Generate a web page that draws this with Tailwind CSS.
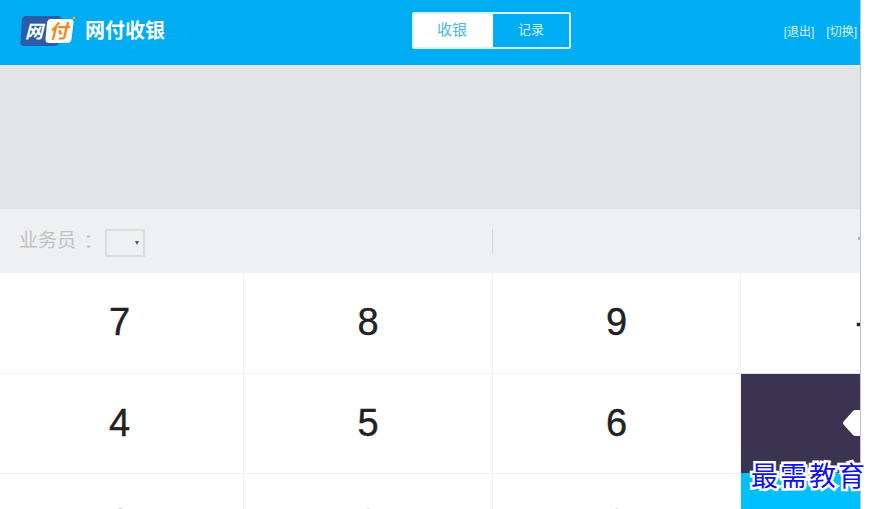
<!DOCTYPE html>
<html lang="zh-CN">
<head>
  <meta charset="UTF-8">
  <title>网付收银</title>
  <script src="https://cdn.jsdelivr.net/npm/@tailwindcss/browser@4"></script>
</head>
<body class="bg-white font-['Liberation_Sans','Noto_Sans_CJK_SC',sans-serif] text-[#222]">
  <div class="relative h-[509px] w-[873px] overflow-hidden">
    <div class="h-[509px] w-[861px] overflow-hidden border-r border-[#c4c4c6]">

      <!-- header -->
      <header class="grid h-[65px] grid-cols-[412px_159px_1fr] items-center bg-[#00adf2] text-white">
        <div class="flex items-center pl-[20px]">
          <svg width="56" height="32" viewBox="0 0 56 32" class="mb-[4px] shrink-0">
            <path d="M6 1H38Q42 1 41 5L39 27Q38.500 31 34 31H4Q0 31 .4 27L2 5Q2.500 1 6 1Z" fill="#2a5da8"/>
            <path d="M31 4H50Q54 4 53.500 8L51.500 24Q51 28 47 28H29Q25 28 25.500 24L27 8Q27.500 4 31 4Z" fill="#fff"/>
            <text x="5" y="23" font-size="18" font-style="italic" font-weight="700" fill="#fff" font-family="Noto Sans CJK SC">网</text>
            <text x="29" y="23" font-size="19" font-style="italic" font-weight="700" fill="#ee8a1d" font-family="Noto Sans CJK SC">付</text>
            <circle cx="54" cy="3" r="1.500" fill="#e6a33c"/>
          </svg>
          <span class="mb-[4px] ml-[9px] text-[20px] leading-none font-bold">网付收银</span>
        </div>
        <div class="mb-[5px] flex h-[37px] w-[159px] overflow-hidden rounded-[2px] border-2 border-[#d6f2fd]">
          <div class="flex w-[79px] items-center justify-center bg-white pr-[3px] text-[15px] text-[#45b8ee]">收银</div>
          <div class="flex flex-1 items-center justify-center text-[13px] text-[#d9f3fd]">记录</div>
        </div>
        <div class="flex justify-end gap-[12px] pr-[3px] pb-[2px] text-[12px] text-[#d9f3fd]">
          <span>[退出]</span>
          <span>[切换]</span>
        </div>
      </header>

      <!-- amount display -->
      <div class="h-[144px] bg-[#e3e4e6]"></div>

      <!-- operator bar -->
      <div class="flex h-[64px] items-center bg-[#eff0f2]">
        <div class="flex w-[492px] items-center pl-[19px]">
          <span class="text-[19px] text-[#c2c3c1]">业务员</span>
          <span class="ml-[3px] font-['Noto_Sans_CJK_TC'] text-[19px] text-[#c2c3c1]">：</span>
          <div class="mt-[4px] ml-[7px] flex h-[28px] w-[40px] items-center justify-end border-2 border-[#dcdcda] pr-[4px]">
            <span class="h-0 w-0 border-x-[2.500px] border-t-[4px] border-x-transparent border-t-[#555]"></span>
          </div>
        </div>
        <div class="h-[25px] border-l border-[#d3d4d5]"></div>
        <span class="mt-[-6px] ml-auto h-[3px] w-[2px] bg-[#b5b5b5]"></span>
      </div>

      <!-- keypad: last column runs past the visible area -->
      <div class="grid w-[990px] grid-cols-[244px_249px_248px_249px] grid-rows-[100px_100px_100px] text-[38px] leading-none [-webkit-text-stroke:0.4px_#222]">
        <div class="flex items-center justify-center border-r border-[#f1f1f2] pr-[4px] pb-[2px]">7</div>
        <div class="flex items-center justify-center border-r border-[#f1f1f2] pb-[2px]">8</div>
        <div class="flex items-center justify-center border-r border-[#f1f1f2] pb-[2px]">9</div>
        <div class="flex items-center justify-center pr-[8px] pb-[2px]">-</div>

        <div class="flex items-center justify-center border-t border-r border-[#f1f1f2] pr-[4px] pb-[2px]">4</div>
        <div class="flex items-center justify-center border-t border-r border-[#f1f1f2] pb-[2px]">5</div>
        <div class="flex items-center justify-center border-t border-r border-[#f1f1f2] pb-[2px]">6</div>
        <div class="flex items-center border-t border-[#e3e3e6] bg-[#3a3451] pl-[102px]">
          <svg width="18" height="26" viewBox="0 0 18 26" class="mb-[2px] shrink-0">
            <path d="M1 11 10 1Q11 0 13 0H18V26H13Q11 26 10 25L1 15Q-1 13 1 11Z" fill="#fff"/>
          </svg>
        </div>

        <div class="flex items-center justify-center border-t border-r border-[#f1f1f2] pr-[4px] pb-[2px]">1</div>
        <div class="flex items-center justify-center border-t border-r border-[#f1f1f2] pb-[2px]">2</div>
        <div class="flex items-center justify-center border-t border-r border-[#f1f1f2] pb-[2px]">3</div>
        <div class="bg-[#00bfff]"></div>
      </div>
    </div>

    <!-- watermark -->
    <div class="absolute top-[459px] left-[751px] text-[27px] leading-[36px] tracking-[2px] whitespace-nowrap text-[#1010f0] [paint-order:stroke_fill] [-webkit-text-stroke:5px_#fff]">最需教育</div>
  </div>
</body>
</html>
